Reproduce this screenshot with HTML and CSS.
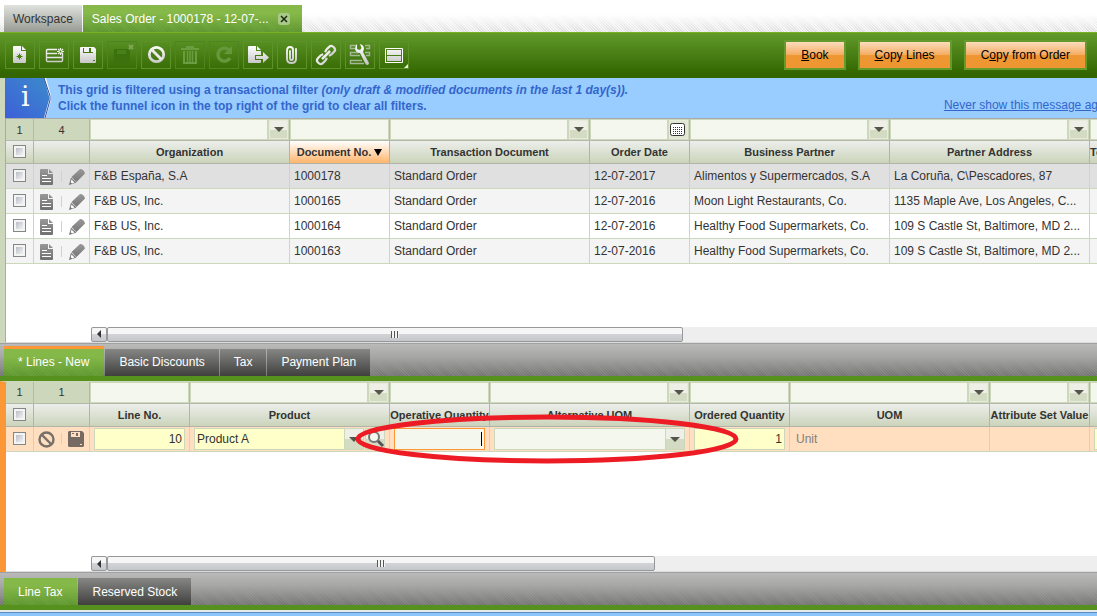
FILE: index.html
```html
<!DOCTYPE html>
<html lang="en">
<head>
<meta charset="utf-8">
<title>Sales Order - 1000178</title>
<link rel="stylesheet" href="styles.css">
</head>
<body>
<svg class="defs" aria-hidden="true">
  <defs>
    <linearGradient id="silver" x1="0" y1="4" x2="0" y2="22" gradientUnits="userSpaceOnUse"><stop offset="0" stop-color="#fff"/><stop offset="1" stop-color="#c4c4c4"/></linearGradient>
    <linearGradient id="ash" x1="0" y1="0" x2="0" y2="16" gradientUnits="userSpaceOnUse"><stop offset="0" stop-color="#989898"/><stop offset="1" stop-color="#707070"/></linearGradient>
    <symbol id="doc" viewBox="0 0 14 16"><path fill="url(#ash)" d="M1 0h7v5h5v10q0 1-1 1H1q-1 0-1-1V1q0-1 1-1zM9 0l4 4H9z"/><path stroke="#fff" d="M2 6.500h5M2 9.500h9M2 12.500h9"/></symbol>
    <symbol id="pencil" viewBox="0 0 16 16"><path fill="url(#ash)" d="M11 0q4 0 5 4.500L7.500 13 2.500 8zM2 8.500l5.500 5L0 16z"/><path fill="#fff" d="M2.500 10.500l3 3-2.500 1-1.300-1.200z"/></symbol>
    <symbol id="deny" viewBox="0 0 17 17"><circle cx="8.500" cy="8.500" r="7" fill="none" stroke="#777069" stroke-width="2.400"/><path stroke="#777069" stroke-width="2.400" d="M3.500 3.500l10 10"/></symbol>
    <symbol id="disk" viewBox="0 0 16 16"><path fill="#776a63" d="M1 0h13l2 2v13l-1 1H1l-1-1V1z"/><path fill="#ffdfbf" d="M3 1h9v5H3z"/><path fill="#776a63" d="M8 2h2v3H8zM4 2h2v1H4z"/><path fill="#ffdfbf" d="M12 13h2v1h-2z"/></symbol>
  </defs>
</svg>

<nav class="windows">
  <button class="window-tab">Workspace</button>
  <div class="window-tab current"><span>Sales Order - 1000178 - 12-07-...</span><button class="close" aria-label="Close tab"><svg width="12" height="12"><path d="M3 3l6 6M9 3l-6 6" stroke="#1c2a0c" stroke-width="1.500"/></svg></button></div>
</nav>

<header class="toolbar">
  <div class="tools">
    <button aria-label="New"><svg viewBox="0 0 28 26"><path fill="url(#silver)" d="M8 4h7v5h5v11q0 1-1 1H8q-1 0-1-1V5q0-1 1-1zM16 4l4 4h-4z"/><path stroke="#4a7f14" d="M13.500 11.500v6M10.500 14.500h6M11.500 12.500l4 4M15.500 12.500l-4 4"/></svg></button>
    <button aria-label="New in grid"><svg viewBox="0 0 28 26"><path fill="none" stroke="url(#silver)" stroke-width="1.400" d="M17 7.500H7.500q-1 0-1 1v10q0 1 1 1h14q1 0 1-1V12"/><path stroke="#e6e6e6" stroke-width="1.400" d="M7 11.500h10M7 15.500h15"/><path stroke="#eef3e8" stroke-width="1.200" d="M20.500 6v7M17 9.500h7M18 7l5 5M23 7l-5 5"/><circle cx="20.500" cy="9.500" r="1" fill="#4a7f14"/></svg></button>
    <button aria-label="Save"><svg viewBox="0 0 28 26"><path fill="url(#silver)" d="M7 5h13l2 2v13q0 1-1 1H7q-1 0-1-1V6q0-1 1-1z"/><path fill="#447a10" d="M9 6h10v5H9zM19 18h2v1h-2z"/><path fill="#f4f4f4" d="M10 6h5v4h-5zM17 6h2v4h-2z"/></svg></button>
    <button aria-label="Save and close" disabled><svg viewBox="0 0 28 26"><path fill="#3c710d" d="M7 7h13l2 2v11q0 1-1 1H7q-1 0-1-1V8q0-1 1-1z"/><path fill="#4a8019" d="M9 8h9v4H9z"/><path stroke="#7fa556" stroke-width="2" d="M21 3l4 4M25 3l-4 4"/></svg></button>
    <button aria-label="Undo"><svg viewBox="0 0 28 26"><circle cx="14.500" cy="12.500" r="7.200" fill="none" stroke="url(#silver)" stroke-width="2.800"/><path stroke="#ebebeb" stroke-width="2.800" d="M9.500 7.500l10 10"/></svg></button>
    <button aria-label="Delete" disabled><svg viewBox="0 0 28 26"><path fill="none" stroke="#6a9c42" stroke-width="2" d="M5 7h18M11 6V5h6v1M8 9v12h12V9"/><path stroke="#6a9c42" stroke-width="1.500" d="M11.500 9v11M14 9v11M16.500 9v11"/></svg></button>
    <button aria-label="Refresh" disabled><svg viewBox="0 0 28 26"><path fill="none" stroke="#65973c" stroke-width="3.400" d="M19 8a6.500 6.500 0 1 0 1 8"/><path fill="#65973c" d="M22 4v8h-8z"/></svg></button>
    <button aria-label="Export"><svg viewBox="0 0 28 26"><path fill="url(#silver)" d="M5 4h7v5h5v4h-6v5h6v2q0 1-1 1H5q-1 0-1-1V5q0-1 1-1zM13 4l4 4h-4zM12 14h7v-4l6 5.500-6 5.500v-4h-7z"/></svg></button>
    <button aria-label="Attachments"><svg viewBox="0 0 28 26"><path fill="none" stroke="url(#silver)" stroke-width="1.900" stroke-linecap="round" d="M12 9v7q0 2 1.500 2t1.500-2V8q0-3-3-3T9 9v8q0 4 4.500 4T18 17V7"/></svg></button>
    <button aria-label="Linked items"><svg viewBox="0 0 28 26"><g fill="none" stroke="url(#silver)" stroke-width="2.200" transform="rotate(-45 14 13)"><path d="M12.500 10.500Q11 9.500 9.500 9.500H6q-3 0-3 3.500t3 3.500h3.500q1.500 0 3-1"/><path d="M15.500 15.500q1.500 1 3 1H22q3 0 3-3.500t-3-3.500h-3.500q-1.500 0-3 1"/><path stroke="#ededed" stroke-width="2.400" d="M9.500 13h9v.1h-9z"/></g></svg></button>
    <button aria-label="Settings"><svg viewBox="0 0 28 26"><path fill="none" stroke="#a4b898" stroke-width="1.400" d="M10 3.500H4.500v3H9M19 3.500h4.500v3H20M13 10.500H4.500v3H14M19 10.500h4.500v3H20M16 18.500H4.500v3H18"/><path fill="url(#silver)" d="M11 2l0 5 3 1 1.500-2L14 2q4 1 4 5l-1 3 6 11q0 2-2 2-1 0-2-2l-5-10q-4 0-5-4 0-3 2-5z"/></svg></button>
    <button aria-label="View"><svg viewBox="0 0 28 26"><path fill="none" stroke="#fff" d="M5.500 6.500h17v14h-17z"/><path fill="url(#silver)" d="M7 8h14v5H7zM7 14h14v5H7z"/><path fill="#e8eee0" d="M28 22v4h-4z"/></svg></button>
  </div>
  <div class="actions">
    <button><u>B</u>ook</button>
    <button><u>C</u>opy Lines</button>
    <button>C<u>o</u>py from Order</button>
  </div>
</header>

<main class="pane orders">
  <section class="notice">
    <svg class="info" viewBox="0 0 46 40"><defs><linearGradient id="blue" x1="0" y1="1" x2="1" y2="0"><stop offset="0" stop-color="#3c5fd8"/><stop offset="1" stop-color="#3c8ccc"/></linearGradient></defs><path fill="url(#blue)" d="M0 0h40l6 20-5 20H0z"/><path fill="none" stroke="#fff" stroke-width="2" d="M40 0l5 18v4l-5 18"/><path fill="none" stroke="#2d4f9c" d="M39 0l6 18v4l-5 18"/></svg>
    <span class="letter">i</span>
    <p>This grid is filtered using a transactional filter <em>(only draft &amp; modified documents in the last 1 day(s)).</em><br>Click the funnel icon in the top right of the grid to clear all filters.</p>
    <a href="#">Never show this message again</a>
  </section>
  <div class="grid">
    <table>
      <colgroup><col class="c-check"><col class="c-tools"><col class="wide"><col class="narrow"><col class="wide"><col class="narrow"><col class="wide"><col class="wide"><col class="narrow"></colgroup>
      <thead>
        <tr class="filters">
          <td>1</td><td>4</td>
          <td><div><input aria-label="Filter organization"><button aria-label="Choose"></button></div></td>
          <td><div><input aria-label="Filter document no."></div></td>
          <td><div><input aria-label="Filter transaction document"><button aria-label="Choose"></button></div></td>
          <td><div><input aria-label="Filter order date"><button class="date" aria-label="Choose date"><svg width="16" height="14"><rect x=".5" y=".5" width="14" height="12" rx="2" fill="#fff" stroke="#333"/><path stroke="#333" stroke-dasharray="1 1" d="M3 4.500h10M3 6.500h10M3 8.500h10M3 10.500h10"/></svg></button></div></td>
          <td><div><input aria-label="Filter business partner"><button aria-label="Choose"></button></div></td>
          <td><div><input aria-label="Filter partner address"><button aria-label="Choose"></button></div></td>
          <td><div><input aria-label="Filter total"></div></td>
        </tr>
        <tr class="heads"><th><input type="checkbox" aria-label="Select all"></th><th></th><th>Organization</th><th class="sorted">Document No. <i></i></th><th>Transaction Document</th><th>Order Date</th><th>Business Partner</th><th>Partner Address</th><th class="start">Total</th></tr>
      </thead>
      <tbody>
        <tr class="selected"><td><input type="checkbox" aria-label="Select 1000178"></td><td><div class="row-tools"><button aria-label="Open"><svg width="14" height="16"><use href="#doc"/></svg></button><button aria-label="Edit"><svg width="16" height="16"><use href="#pencil"/></svg></button></div></td><td>F&amp;B España, S.A</td><td>1000178</td><td>Standard Order</td><td>12-07-2017</td><td>Alimentos y Supermercados, S.A</td><td>La Coruña, C\Pescadores, 87</td><td></td></tr>
        <tr><td><input type="checkbox" aria-label="Select 1000165"></td><td><div class="row-tools"><button aria-label="Open"><svg width="14" height="16"><use href="#doc"/></svg></button><button aria-label="Edit"><svg width="16" height="16"><use href="#pencil"/></svg></button></div></td><td>F&amp;B US, Inc.</td><td>1000165</td><td>Standard Order</td><td>12-07-2016</td><td>Moon Light Restaurants, Co.</td><td>1135 Maple Ave, Los Angeles, C...</td><td></td></tr>
        <tr><td><input type="checkbox" aria-label="Select 1000164"></td><td><div class="row-tools"><button aria-label="Open"><svg width="14" height="16"><use href="#doc"/></svg></button><button aria-label="Edit"><svg width="16" height="16"><use href="#pencil"/></svg></button></div></td><td>F&amp;B US, Inc.</td><td>1000164</td><td>Standard Order</td><td>12-07-2016</td><td>Healthy Food Supermarkets, Co.</td><td>109 S Castle St, Baltimore, MD 2...</td><td></td></tr>
        <tr><td><input type="checkbox" aria-label="Select 1000163"></td><td><div class="row-tools"><button aria-label="Open"><svg width="14" height="16"><use href="#doc"/></svg></button><button aria-label="Edit"><svg width="16" height="16"><use href="#pencil"/></svg></button></div></td><td>F&amp;B US, Inc.</td><td>1000163</td><td>Standard Order</td><td>12-07-2016</td><td>Healthy Food Supermarkets, Co.</td><td>109 S Castle St, Baltimore, MD 2...</td><td></td></tr>
      </tbody>
    </table>
  </div>
  <div class="scroll"><button aria-label="Scroll left"></button><div class="thumb"><i></i></div></div>
</main>

<nav class="tabs">
  <button class="current marked">* Lines - New</button><button>Basic Discounts</button><button>Tax</button><button>Payment Plan</button>
</nav>

<section class="pane lines">
  <div class="grid">
    <table>
      <colgroup><col class="c-check"><col class="c-tools"><col class="narrow"><col class="wide"><col class="narrow"><col class="wide"><col class="narrow"><col class="wide"><col class="narrow"><col class="narrow"></colgroup>
      <thead>
        <tr class="filters">
          <td>1</td><td>1</td>
          <td><div><input aria-label="Filter line no."></div></td>
          <td><div><input aria-label="Filter product"><button aria-label="Choose"></button></div></td>
          <td><div><input aria-label="Filter operative quantity"></div></td>
          <td><div><input aria-label="Filter alternative UOM"><button aria-label="Choose"></button></div></td>
          <td><div><input aria-label="Filter ordered quantity"></div></td>
          <td><div><input aria-label="Filter UOM"><button aria-label="Choose"></button></div></td>
          <td><div><input aria-label="Filter attribute set value"><button aria-label="Choose"></button></div></td>
          <td><div><input aria-label="Filter next field"></div></td>
        </tr>
        <tr class="heads"><th><input type="checkbox" aria-label="Select all lines"></th><th></th><th>Line No.</th><th>Product</th><th>Operative Quantity</th><th>Alternative UOM</th><th>Ordered Quantity</th><th>UOM</th><th>Attribute Set Value</th><th></th></tr>
      </thead>
      <tbody>
        <tr class="editing">
          <td><input type="checkbox" aria-label="Select line 10"></td>
          <td><div class="row-tools"><button aria-label="Cancel"><svg width="17" height="17"><use href="#deny"/></svg></button><button aria-label="Save line"><svg width="16" height="16"><use href="#disk"/></svg></button></div></td>
          <td><div class="field"><input class="number" aria-label="Line No." value="10"></div></td>
          <td><div class="field"><select class="required" aria-label="Product"><option>Product A</option></select><button class="lookup" aria-label="Search product"><svg width="18" height="18"><circle cx="7" cy="7" r="5" fill="#f4f7ee" stroke="#777" stroke-width="2"/><path d="M11 11l5 5" stroke="#555" stroke-width="3"/></svg></button></div></td>
          <td><div class="field"><div class="focus"><input aria-label="Operative Quantity"><i class="caret"></i></div></div></td>
          <td><div class="field"><select aria-label="Alternative UOM"><option></option></select></div></td>
          <td><div class="field"><input class="number" aria-label="Ordered Quantity" value="1"></div></td>
          <td class="readonly">Unit</td><td></td>
          <td><div class="field"><input class="number" aria-label="Next field"></div></td>
        </tr>
      </tbody>
    </table>
  </div>
  <div class="scroll short"><button aria-label="Scroll left"></button><div class="thumb"><i></i></div></div>
  <svg class="highlight" width="384" height="50" aria-hidden="true"><ellipse cx="192" cy="25" rx="189" ry="22" fill="none" stroke="#ed1c24" stroke-width="5"/></svg>
</section>

<nav class="tabs">
  <button class="current">Line Tax</button><button>Reserved Stock</button>
</nav>
<footer class="edge"></footer>
</body>
</html>
```
FILE: styles.css
```css
* { box-sizing: border-box; }
body {
  margin: 0;
  min-height: 100vh;
  display: flex;
  flex-direction: column;
  overflow: hidden;
  background: #fff;
  color: #333;
  font: 12px/16px "Liberation Sans", Arial, sans-serif;
}
button, input, select { font: inherit; color: inherit; margin: 0; padding: 0; border: 0; border-radius: 0; outline: 0; min-width: 0; }
button { background: none; }
svg { display: block; }
.defs { position: absolute; width: 0; height: 0; }

.windows {
  display: flex;
  gap: 1px;
  padding: 5px 4px 0;
  height: 32px;
  background: linear-gradient(#fff 45%, rgba(255,255,255,0)), repeating-linear-gradient(45deg, #dedede 0 1px, #f4f4f4 1px 2px);
}
.window-tab {
  display: flex;
  align-items: center;
  padding: 0 9px;
  background: linear-gradient(#e0e2dd, #989a94);
}
.window-tab.current {
  gap: 9px;
  color: #fff;
  background: linear-gradient(#86b949 30%, rgba(112,166,56,.4)), repeating-linear-gradient(45deg, #52892c 0 1px, #639a36 1px 2px);
}
.close { width: 12px; height: 12px; margin-right: 3px; border-radius: 3px; background: #a9c98a; }

.toolbar {
  display: flex;
  justify-content: space-between;
  align-items: center;
  height: 46px;
  padding: 0 10px 0 5px;
  border-top: 1px solid #7ab223;
  background: linear-gradient(#619a2b, #336600 90%);
}
.tools { display: flex; gap: 4px; padding-bottom: 1px; }
.tools button { width: 30px; height: 28px; border: 1px solid #5c9229; }
.tools button:disabled { border-color: #4f8521; }
.tools svg { width: 28px; height: 26px; }
.actions { display: flex; gap: 12px; padding-bottom: 1px; }
.actions button {
  height: 30px;
  padding: 0 15px;
  border: 2px solid #669a2c;
  color: #000;
  background: linear-gradient(#fbdcbc, #f4ae66 48%, #ee9732 52%) padding-box;
}

.pane {
  position: relative;
  display: flex;
  flex-direction: column;
  min-width: 0;
  overflow: hidden;
  border-left: 5px solid #cdd7bb;
}
.orders { flex: 266 1 0; }
.lines { flex: 191 1 0; border-left-color: #fb9736; border-top: 1px solid #cdd7bb; }

.notice {
  position: relative;
  display: flex;
  align-items: flex-start;
  height: 40px;
  background: #99ccff;
  color: #3366cc;
  white-space: nowrap;
}
.info { width: 46px; height: 40px; }
.letter { position: absolute; left: 16px; top: 2px; color: #fff; font: 27px/34px "DejaVu Serif", serif; }
.notice p { margin: 4px 0 0 7px; font-weight: bold; }
.notice a { margin: 19px -17px 0 auto; color: #3366cc; }

.grid { flex: 1; border-left: 1px solid #aaa; overflow: hidden; }
.orders .grid { border-top: 1px solid #aaa; }
table { table-layout: fixed; border-collapse: separate; border-spacing: 0; width: 1184px; }
.c-check { width: 28px; }
.c-tools { width: 56px; }
.narrow { width: 100px; }
.wide { width: 200px; }
td, th { padding: 0 4px; white-space: nowrap; overflow: hidden; border: solid #cdd7bb; border-width: 0 1px 1px 0; text-align: left; }
tr > :first-child { padding: 0; text-align: center; }
tr > :nth-child(2) { padding: 0; text-align: center; }
.filters td { height: 22px; padding: 0; border-color: #b4baaa; background: #cdd7bb; font-size: 11px; }
.filters div { display: flex; height: 21px; padding: 1px; gap: 2px; }
.filters input { flex: 1; width: 0; background: #f4f7ee; }
.filters button {
  width: 19px;
  border: 1px solid #e6ebdb;
  background: url("data:image/svg+xml,%3Csvg xmlns='http://www.w3.org/2000/svg' width='10' height='5'%3E%3Cpath fill='%23555549' d='M0 0h10L5 5z'/%3E%3C/svg%3E") center no-repeat, linear-gradient(#eeefe6 50%, #d3dbc2 50%);
}
.filters .date { background: #dfe6d2; }
.heads th { height: 23px; padding: 0; border-color: #b0b4ab; background: linear-gradient(#eceeeb, #cbd4ba); font-size: 11px; text-align: center; }
.heads .start { text-align: left; }
.heads .sorted { background: linear-gradient(#fff, #ffb56b); }
.sorted i { display: inline-block; border: solid transparent; border-width: 7px 4px 0; border-top-color: #000; }
tbody td { height: 25px; }
tbody tr:nth-child(even) { background: #f4f4f4; }
tbody .selected { background: #e1e0e1; }
tbody .editing { background: #ffdfbf; }

input[type="checkbox"] {
  appearance: none;
  display: block;
  width: 13px;
  height: 13px;
  margin: 0 auto 1px;
  border: 1px solid #858686;
  background: linear-gradient(135deg, #b9bec6, #f2f2f2) content-box, #f4f4f4;
  padding: 2px;
}
.row-tools { display: flex; justify-content: space-between; align-items: center; padding: 1px 4px 0 6px; background: linear-gradient(#cdd7bb, #cdd7bb) 27px center / 1px 11px no-repeat; }
.editing .row-tools { padding: 1px 5px 0 4px; }

.field { display: flex; height: 22px; gap: 1px; }
.field input, .field select { flex: 1; width: 0; border: 1px solid #cdd7bb; background-color: #f4f7ee; padding: 0 2px; }
.field .number, .field .required { background-color: #ffffc9; }
.number { text-align: right; }
.field select {
  appearance: none;
  background-image: url("data:image/svg+xml,%3Csvg xmlns='http://www.w3.org/2000/svg' width='19' height='20'%3E%3Cpath fill='%23cdd7bb' d='M0 0h19v20H0z'/%3E%3Cpath fill='%23eeefe6' d='M1 0h18v10H1z'/%3E%3Cpath fill='%23d3dbc2' d='M1 10h18v10H1z'/%3E%3Cpath fill='%23555549' d='M5 8h10l-5 5z'/%3E%3C/svg%3E");
  background-repeat: no-repeat;
  background-position: right center;
}
.lookup { width: 20px; padding: 1px; border: 1px solid #cdd7bb; background: linear-gradient(#eeefe6 50%, #d3dbc2 50%); }
.focus { display: flex; align-items: center; flex: 1; padding-right: 2px; border: 1px solid #fb9736; background: #f4f7ee; }
.field .focus input { border: 0; height: 18px; }
.caret { width: 1px; height: 14px; background: #000; }
.editing .readonly { padding-left: 6px; color: #808080; }

.scroll { display: flex; height: 16px; padding-left: 85px; border-bottom: 1px solid #ddd; border-left: 1px solid #aaa; background: linear-gradient(#eee, #eee) content-box; }
.scroll button, .thumb { border: 1px solid #96989c; border-radius: 2px; background: linear-gradient(#f6f6f6 45%, #d2d3d6 50%, #c6c7cb); }
.scroll button { display: flex; align-items: center; justify-content: center; width: 16px; }
.scroll button::before { content: ""; border: solid transparent; border-width: 4px 4px 4px 0; border-right-color: #333; }
.thumb { display: flex; align-items: center; justify-content: center; width: calc(57% + 3px); }
.short .thumb { width: calc(54% + 5px); }
.thumb i { width: 8px; height: 7px; background: repeating-linear-gradient(90deg, #555 0 1px, #f4f4f4 1px 3px); }

.tabs {
  display: flex;
  align-items: flex-end;
  gap: 1px;
  height: 38px;
  padding-left: 4px;
  border-top: 1px solid #a0a0a0;
  border-bottom: 5px solid #55911c;
  background: linear-gradient(#bababa, #a6a6a4 40%, rgba(140,140,140,.3)), repeating-linear-gradient(45deg, #696969 0 1px, #7b7b7b 1px 2px);
}
.tabs button { height: 27px; padding: 0 14px; color: #fff; background: linear-gradient(#868784, #40413e); }
.tabs .current { padding-right: 15px; background: linear-gradient(#84b848 30%, rgba(112,166,56,.4)), repeating-linear-gradient(45deg, #52892c 0 1px, #639a36 1px 2px); }
.tabs .marked { height: 30px; border-top: 3px solid #fb9736; }
.edge { height: 6px; border-top: 2px solid #e4eaee; background: linear-gradient(#5d8fc4 1px, #8cc5fb 1px); }

.highlight { position: absolute; left: 350px; top: 32px; }
```
